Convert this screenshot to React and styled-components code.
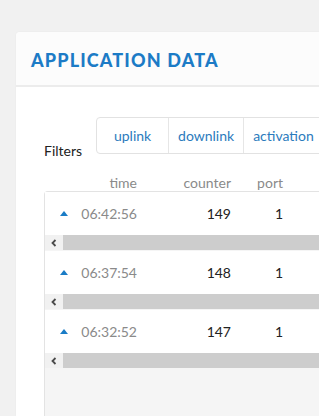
import styled, { createGlobalStyle } from "styled-components"

const GlobalStyle = createGlobalStyle`
    html, body {
        margin: 0;
        padding: 0;
        background: #f1f1f1;
        overflow: hidden;
        font-family: Lato, "Liberation Sans", sans-serif;
    }
`

const messages = [
    { time: "06:42:56", counter: 149, port: 1 },
    { time: "06:37:54", counter: 148, port: 1 },
    { time: "06:32:52", counter: 147, port: 1 },
]

const filters = ["uplink", "downlink", "activation"]

const App = () => {
    return <>
        <GlobalStyle />
        <Page>
            <Card>
                <Header>
                    <Title>Application Data</Title>
                </Header>
                <Body>
                    <FilterRow>
                        <FilterLabel>Filters</FilterLabel>
                        <Tabs>
                            {filters.map((f) => <Tab key={f}>{f}</Tab>)}
                        </Tabs>
                    </FilterRow>
                    <Columns>
                        <span />
                        <HeadCell>time</HeadCell>
                        <HeadCell>counter</HeadCell>
                        <HeadCell>port</HeadCell>
                    </Columns>
                    <List>
                        {messages.map((m) => (
                            <Item key={m.counter}>
                                <Row>
                                    <Arrow />
                                    <Time>{m.time}</Time>
                                    <Value>{m.counter}</Value>
                                    <Value>{m.port}</Value>
                                </Row>
                                <Scrollbar>
                                    <ScrollButton>
                                        <svg width="6" height="8" viewBox="0 0 6 8">
                                            <polyline points="4.5,1 1.5,4 4.5,7" fill="none" stroke="#4a4a4a" strokeWidth="1.8" />
                                        </svg>
                                    </ScrollButton>
                                    <Thumb />
                                </Scrollbar>
                            </Item>
                        ))}
                    </List>
                </Body>
            </Card>
        </Page>
    </>
}

const Page = styled.div`
    padding: 32px 0 0 16px;
    width: 319px;
    height: 416px;
    box-sizing: border-box;
    overflow: hidden;
`

const Card = styled.div`
    width: 420px;
    height: 100%;
    background: #ffffff;
    border-radius: 4px 4px 0 0;
    box-shadow: 0 0 2px rgba(0, 0, 0, 0.06);
    display: flex;
    flex-direction: column;
`

const Header = styled.div`
    height: 53px;
    background: #fcfcfc;
    border-bottom: 2px solid #ececec;
    border-radius: 4px 4px 0 0;
    display: flex;
    align-items: center;
    padding-left: 15px;
    flex-shrink: 0;
`

const Title = styled.h1`
    margin: 0;
    font-size: 18px;
    font-weight: 900;
    text-transform: uppercase;
    letter-spacing: 1.15px;
    color: #1c7bc6;
    padding-top: 2px;
`

const Body = styled.div`
    flex: 1;
    padding: 30px 0 0 28px;
    display: flex;
    flex-direction: column;
`

const FilterRow = styled.div`
    display: flex;
    align-items: flex-start;
    gap: 14px;
`

const FilterLabel = styled.span`
    font-size: 14px;
    line-height: 20px;
    color: #222;
    padding-top: 24px;
`

const Tabs = styled.div`
    display: flex;
    height: 37px;
    box-sizing: border-box;
    border: 1px solid #e2e2e2;
    border-radius: 4px;
    background: #fff;
`

const Tab = styled.div`
    min-width: 71px;
    padding: 0 9px 1px;
    box-sizing: border-box;
    display: flex;
    align-items: center;
    justify-content: center;
    font-size: 14px;
    color: #2b7bbd;
    & + & {
        border-left: 1px solid #e6e6e6;
    }
`

const Columns = styled.div`
    margin-top: 13px;
    display: grid;
    grid-template-columns: 36px 56px 94px 52px;
    padding-left: 1px;
    height: 17px;
    align-items: center;
`

const HeadCell = styled.span`
    font-size: 14px;
    color: #8a8a8a;
    text-align: right;
`

const List = styled.div`
    flex: 1;
    background: #f5f5f5;
    border: 1px solid #e3e3e3;
    border-right: none;
    border-bottom: none;
    border-radius: 4px 0 0 0;
`

const Item = styled.div`
    margin-bottom: 1px;
`

const Row = styled.div`
    height: 43px;
    background: #fff;
    display: grid;
    grid-template-columns: 36px 56px 94px 52px;
    align-items: center;
`

const Arrow = styled.span`
    justify-self: start;
    margin-left: 15px;
    width: 0;
    height: 0;
    border-left: 4.5px solid transparent;
    border-right: 4.5px solid transparent;
    border-bottom: 5px solid #1a7cc6;
`

const Time = styled.span`
    font-size: 14px;
    color: #8a8a8a;
    text-align: right;
`

const Value = styled.span`
    font-size: 14px;
    color: #222;
    text-align: right;
`

const Scrollbar = styled.div`
    height: 15px;
    display: flex;
    background: #f1f1f1;
`

const ScrollButton = styled.div`
    width: 18px;
    display: flex;
    align-items: center;
    justify-content: center;
    background: #f1f1f1;
`

const Thumb = styled.div`
    flex: 1;
    background: #cdcdcd;
`

export default App
